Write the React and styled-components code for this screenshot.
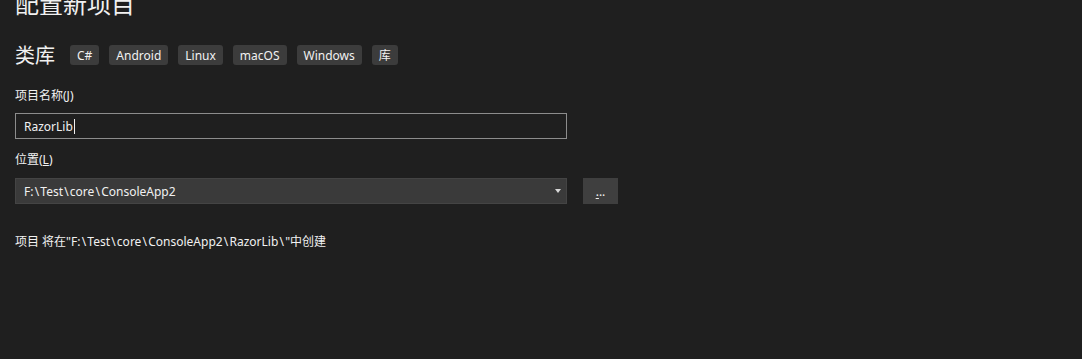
import React from 'react'
import styled, { createGlobalStyle } from 'styled-components'

const GlobalStyle = createGlobalStyle`
  html, body {
    margin: 0;
    padding: 0;
    background: #1f1f1f;
    overflow: hidden;
  }
  body {
    font-family: "Noto Sans", "Noto Sans CJK SC", sans-serif;
    color: #f1f1f1;
  }
`

const Page = styled.div`
  width: 1082px;
  height: 359px;
  padding: 0 15px;
  box-sizing: border-box;
  display: flex;
  flex-direction: column;
  overflow: hidden;
`

const Title = styled.h1`
  margin: -9px 0 0;
  font-size: 24px;
  line-height: 24px;
  font-weight: 400;
  font-family: "Noto Sans CJK SC", sans-serif;
`

const TemplateRow = styled.div`
  display: flex;
  align-items: center;
  margin-top: 30px;
  height: 20px;
`

const TemplateName = styled.span`
  font-size: 20px;
  line-height: 20px;
  font-family: "Noto Sans CJK SC", sans-serif;
  margin-right: 15px;
`

const Tags = styled.div`
  display: flex;
  gap: 10px;
`

const Tag = styled.span`
  display: inline-flex;
  align-items: center;
  height: 20px;
  padding: 0 7px;
  border-radius: 3px;
  background: #3c3c3c;
  font-size: 12px;
  color: #f1f1f1;
`

const Label = styled.label`
  display: block;
  font-size: 12px;
  line-height: 16px;
  margin-top: ${p => p.$top}px;
`

const TextBox = styled.div`
  margin-top: 9px;
  width: 552px;
  height: 26px;
  box-sizing: border-box;
  border: 1px solid #8c8c8c;
  display: flex;
  align-items: center;
  padding-left: 8px;
  font-size: 12px;
`

const Caret = styled.span`
  display: inline-block;
  width: 1px;
  height: 15px;
  background: #f1f1f1;
  margin-left: 1px;
`

const LocationRow = styled.div`
  display: flex;
  margin-top: 10px;
  gap: 16px;
`

const Combo = styled.div`
  width: 552px;
  height: 26px;
  box-sizing: border-box;
  background: #3a3a3a;
  border: 1px solid #444;
  display: flex;
  align-items: center;
  justify-content: space-between;
  padding: 0 4px 0 8px;
  font-size: 12px;
`

const Arrow = styled.span`
  width: 0;
  height: 0;
  border-left: 3.5px solid transparent;
  border-right: 3.5px solid transparent;
  border-top: 4px solid #d8d8d8;
  margin-right: 1px;
`

const BrowseButton = styled.button`
  width: 35px;
  height: 26px;
  border: none;
  background: #3f3f3f;
  color: #f1f1f1;
  font-family: "Noto Sans", sans-serif;
  font-size: 12px;
  padding: 0;
  display: flex;
  align-items: center;
  justify-content: center;
  u { text-underline-offset: 2px; }
`

const Summary = styled.p`
  margin: 30px 0 0;
  font-size: 12px;
  line-height: 16px;
`

const Sep = styled.span`
  padding: 0 1.2px;
`

const PathText = ({ value }) => {
  const parts = value.split('\\')
  return parts.map((p, i) => (
    <React.Fragment key={i}>
      {p}
      {i < parts.length - 1 && <Sep>\</Sep>}
    </React.Fragment>
  ))
}

const tags = ['C#', 'Android', 'Linux', 'macOS', 'Windows', '库']

export default function App() {
  return (
    <Page>
      <GlobalStyle />
      <Title>配置新项目</Title>
      <TemplateRow>
        <TemplateName>类库</TemplateName>
        <Tags>
          {tags.map(t => <Tag key={t}>{t}</Tag>)}
        </Tags>
      </TemplateRow>
      <Label $top={23}>项目名称(<u>J</u>)</Label>
      <TextBox>RazorLib<Caret /></TextBox>
      <Label $top={13}>位置(<u>L</u>)</Label>
      <LocationRow>
        <Combo>
          <span><PathText value={'F:\\Test\\core\\ConsoleApp2'} /></span>
          <Arrow />
        </Combo>
        <BrowseButton><u>.</u>..</BrowseButton>
      </LocationRow>
      <Summary>项目 将在"<PathText value={'F:\\Test\\core\\ConsoleApp2\\RazorLib\\'} />"中创建</Summary>
    </Page>
  )
}
